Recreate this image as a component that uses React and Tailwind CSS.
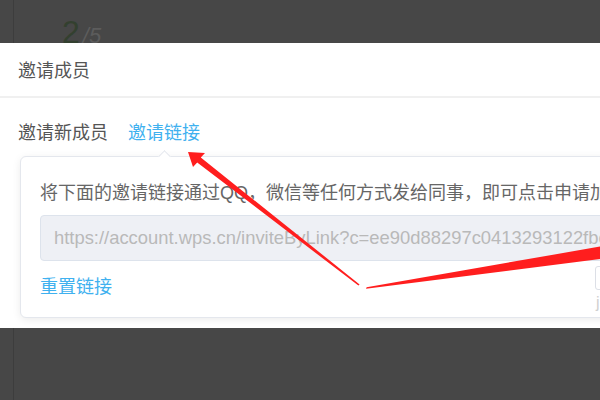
export default function App() {
  const cjk = "font-['Liberation_Sans','Noto_Sans_CJK_SC',sans-serif]";

  return (
    <div className="relative w-[600px] h-[400px] overflow-hidden bg-[#474747] flex flex-col">
      {/* page behind the dialog */}
      <div className="h-[43px] shrink-0 overflow-hidden">
        <div className="ml-[13px] h-full border-l border-[#3d3d3d] pl-[48px] pt-[16px]">
          <span className="font-['Liberation_Sans',sans-serif] text-[32px] leading-[32px] font-light text-[#33402f]">
            2
          </span>
          <span className="font-['Liberation_Sans',sans-serif] text-[22px] leading-[32px] font-light italic text-[#5c5c5c] ml-[3px]">
            /5
          </span>
        </div>
      </div>

      {/* dialog */}
      <div className={`relative h-[285px] shrink-0 bg-white overflow-hidden ${cjk}`}>
        <div className="h-[55px] px-[18px] pt-[3px] flex items-center border-b-2 border-[#f0f0f0] text-[18px] text-[#555]">
          邀请成员
        </div>

        <div className="pt-[23px] px-[18px] flex items-center gap-[20px] text-[18px] leading-[24px]">
          <span className="text-[#555]">邀请新成员</span>
          <span className="text-[#3fb1ef]">邀请链接</span>
        </div>

        {/* popover */}
        <div className="relative mt-[11px] ml-[20px] w-[620px] h-[162px] bg-white border border-[#e4e7ed] rounded-[6px] shadow-[0_2px_8px_rgba(0,0,0,0.08)] pt-[24px] px-[19px]">
          <div className="absolute left-[139px] top-[-5px] w-[9px] h-[9px] rotate-45 bg-white border-l border-t border-[#e4e7ed]" />
          <p className="text-[18px] leading-[24px] text-[#666] whitespace-nowrap">
            将下面的邀请链接通过QQ，微信等任何方式发给同事，即可点击申请加入
          </p>
          <div className="mt-[10px] h-[46px] bg-[#eef0f5] border border-[#dde3ec] rounded-[4px] flex items-center pl-[13px] whitespace-nowrap overflow-hidden">
            <span className="font-['Liberation_Sans',sans-serif] text-[18.4px] text-[#b9b9b9]">
              https://account.wps.cn/inviteByLink?c=ee90d88297c0413293122fbc2a
            </span>
          </div>
          <div className="mt-[14px] text-[18px] leading-[24px] text-[#3fb1ef]">重置链接</div>
        </div>

        {/* cut-off button on the right edge */}
        <div className="absolute left-[595px] top-[223px] w-[24px] h-[24px] border border-[#dcdfe6] rounded-[3px] bg-white" />
        <span className="absolute left-[596px] top-[250px] font-['Liberation_Sans',sans-serif] text-[16px] leading-[20px] text-[#d0d0d0]">
          j
        </span>
      </div>

      <div className="flex-1">
        <div className="ml-[13px] h-full border-l border-[#3d3d3d]" />
      </div>

      {/* red annotation arrows */}
      <svg className="absolute inset-0 pointer-events-none" width="600" height="400" viewBox="0 0 600 400">
        <polygon
          fill="#ff1e1e"
          points="359.6,284.4 200.8,157.6 205,153 188,152 193,167 197.2,162.4 358.4,285.6"
        />
        <polygon fill="#ff1e1e" points="366,288.8 366.6,287.2 612,244.5 612,257.5" />
      </svg>
    </div>
  );
}
